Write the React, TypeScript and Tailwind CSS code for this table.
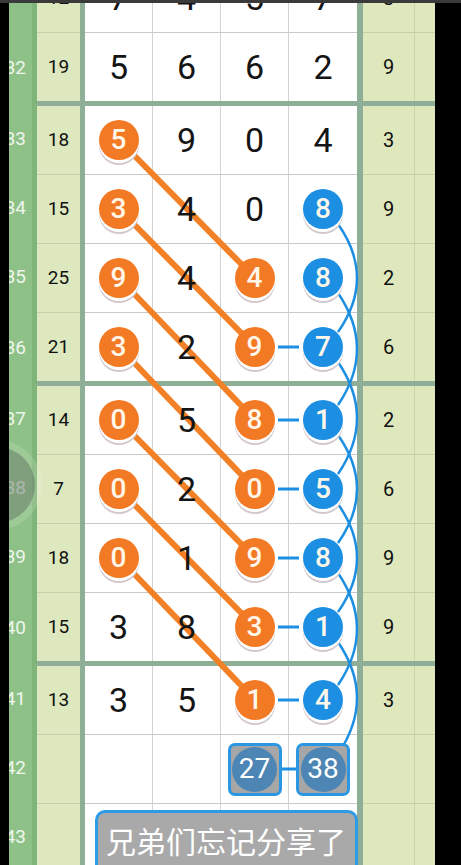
import React from 'react';

type C = { v: string; t?: 'o' | 'b' | 'box' } | null;
type R = { n: string; l: string; c: C[]; r: string; thick?: boolean; button?: boolean };

const rows: R[] = [
  { n: '31', l: '12', c: [{ v: '7' }, { v: '4' }, { v: '5' }, { v: '7' }], r: '3' },
  { n: '32', l: '19', c: [{ v: '5' }, { v: '6' }, { v: '6' }, { v: '2' }], r: '9', thick: true },
  { n: '33', l: '18', c: [{ v: '5', t: 'o' }, { v: '9' }, { v: '0' }, { v: '4' }], r: '3' },
  { n: '34', l: '15', c: [{ v: '3', t: 'o' }, { v: '4' }, { v: '0' }, { v: '8', t: 'b' }], r: '9' },
  { n: '35', l: '25', c: [{ v: '9', t: 'o' }, { v: '4' }, { v: '4', t: 'o' }, { v: '8', t: 'b' }], r: '2' },
  { n: '36', l: '21', c: [{ v: '3', t: 'o' }, { v: '2' }, { v: '9', t: 'o' }, { v: '7', t: 'b' }], r: '6', thick: true },
  { n: '37', l: '14', c: [{ v: '0', t: 'o' }, { v: '5' }, { v: '8', t: 'o' }, { v: '1', t: 'b' }], r: '2' },
  { n: '38', l: '7', c: [{ v: '0', t: 'o' }, { v: '2' }, { v: '0', t: 'o' }, { v: '5', t: 'b' }], r: '6' },
  { n: '39', l: '18', c: [{ v: '0', t: 'o' }, { v: '1' }, { v: '9', t: 'o' }, { v: '8', t: 'b' }], r: '9' },
  { n: '40', l: '15', c: [{ v: '3' }, { v: '8' }, { v: '3', t: 'o' }, { v: '1', t: 'b' }], r: '9', thick: true },
  { n: '41', l: '13', c: [{ v: '3' }, { v: '5' }, { v: '1', t: 'o' }, { v: '4', t: 'b' }], r: '3' },
  { n: '42', l: '', c: [null, null, { v: '27', t: 'box' }, { v: '38', t: 'box' }], r: '' },
  { n: '43', l: '', c: [null, null, null, null], r: '', button: true },
];

function CellContent({ c }: { c: C }) {
  if (!c) return null;
  if (c.t === 'o' || c.t === 'b') {
    return (
      <div
        className={
          'relative z-10 w-[40px] h-[40px] rounded-full flex items-center justify-center text-[28px] leading-none font-medium text-[#fff7ea] shadow-[0_3px_0_0_#ffffff,0_5px_0_0_#d2c8ce] ' +
          (c.t === 'o' ? 'bg-[#f37a24]' : 'bg-[#1c8fe2]')
        }
      >
        {c.v}
      </div>
    );
  }
  if (c.t === 'box') {
    return (
      <div className="relative z-10 w-[54px] h-[53px] rounded-[7px] border-[3px] border-[#2b97e3] bg-[#a6a6a6] flex items-center justify-center">
        <div className="w-[45px] h-[45px] rounded-full bg-[#4d86b4] flex items-center justify-center text-[28px] leading-none text-white">
          {c.v}
        </div>
      </div>
    );
  }
  return <span className="relative z-10 text-[34px] leading-none text-[#141414]">{c.v}</span>;
}

function Row({ row }: { row: R }) {
  const hh = row.thick ? 'h-[73px]' : 'h-[69px]';
  const h = row.thick ? 'h-[73px] border-b-[5px]' : 'h-[69px] border-b';
  const gridBorder = row.thick ? 'border-[#8fae97]' : 'border-[#c9c9c9]';
  const creamBorder = row.thick ? 'border-[#8fae97]' : 'border-[#c6cfa9]';
  return (
    <div className="flex">
      <div
        className={
          'w-[28px] overflow-hidden flex items-center justify-end pr-[6px] bg-[#8dc187] border-r-[5px] border-[#7fb579] text-[19px] text-white/85 ' +
          hh
        }
      >
        <span className="pb-[2px]">{row.n}</span>
      </div>
      <div className={'w-[43px] flex items-center justify-center bg-[#dde8bf] text-[19px] text-[#111] ' + h + ' ' + creamBorder}>
        {row.l}
      </div>
      <div className={'w-[5px] bg-[#8fae97] ' + hh} />
      <div className={'relative flex w-[272px] bg-white ' + h + ' ' + gridBorder}>
        {row.c.map((c, i) => (
          <div
            key={i}
            className={'w-[68px] h-full flex items-center justify-center ' + (i < 3 ? 'border-r border-[#d3d3d3]' : '')}
          >
            <CellContent c={c} />
          </div>
        ))}
        {row.button && (
          <div className="absolute z-10 left-[10px] top-[6px] w-[263px] h-[72px] rounded-[10px] border-[3px] border-[#2d9be5] bg-[#a9a9a9] flex items-start pt-[10px] pl-[8px] text-[30px] leading-[40px] text-white">
            兄弟们忘记分享了
          </div>
        )}
      </div>
      <div className={'w-[6px] bg-[#8fae97] ' + hh} />
      <div className={'w-[72px] flex bg-[#dee8bc] ' + h + ' ' + creamBorder}>
        <div className="w-[51px] flex items-center justify-center text-[20px] text-[#111]">{row.r}</div>
        <div className="w-[1px] bg-[#c9d3a8]" />
        <div className="w-[20px]" />
      </div>
    </div>
  );
}

const blueY = [209, 278, 347, 420, 489, 558, 627, 700, 769];
const orangePairs: [number, number][] = [
  [140, 278],
  [209, 347],
  [278, 420],
  [347, 489],
  [420, 558],
  [489, 627],
  [558, 700],
];
const dashY = [347, 420, 489, 558, 627, 700];

export default function App() {
  return (
    <div className="relative w-[461px] h-[865px] overflow-hidden bg-black font-['Roboto','Noto_Sans_CJK_SC',sans-serif]">
      <div className="flex h-[865px]">
        <div className="w-[9px] shrink-0 bg-black" />
        <div className="relative w-[426px] shrink-0 h-[865px] overflow-hidden">
          <div className="mt-[-36px] flex flex-col">
            {rows.map((r) => (
              <Row key={r.n} row={r} />
            ))}
          </div>
          <svg
            className="absolute top-0 left-[-9px] z-[5] pointer-events-none"
            width={461}
            height={865}
            viewBox="0 0 461 865"
          >
            {orangePairs.map(([a, b], i) => (
              <line key={'o' + i} x1={119} y1={a} x2={255} y2={b} stroke="#f28026" strokeWidth={6} strokeLinecap="round" />
            ))}
            {dashY.map((y, i) => (
              <line key={'d' + i} x1={278} y1={y} x2={299} y2={y} stroke="#1c8fe2" strokeWidth={3} />
            ))}
            <line x1={282} y1={769} x2={303} y2={769} stroke="#1c8fe2" strokeWidth={3} />
            {blueY.slice(0, 7).map((y, i) => {
              const y2 = blueY[i + 2];
              const mid = (y + y2) / 2;
              return (
                <path
                  key={'b' + i}
                  d={`M 338 ${y + 15} Q 376 ${mid} 338 ${y2 - 15}`}
                  fill="none"
                  stroke="#1c8fe2"
                  strokeWidth={2.5}
                />
              );
            })}
          </svg>
          <div className="absolute z-20 left-[-57px] top-[440px] w-[90px] h-[90px] rounded-full bg-white/15 flex items-center justify-center">
            <div className="w-[76px] h-[76px] rounded-full bg-[#5b6b5b]/45" />
          </div>
        </div>
        <div className="flex-1 bg-black" />
      </div>
      <div className="absolute top-0 left-0 w-full h-[3px] bg-[#3a3a3a] z-30" />
    </div>
  );
}
